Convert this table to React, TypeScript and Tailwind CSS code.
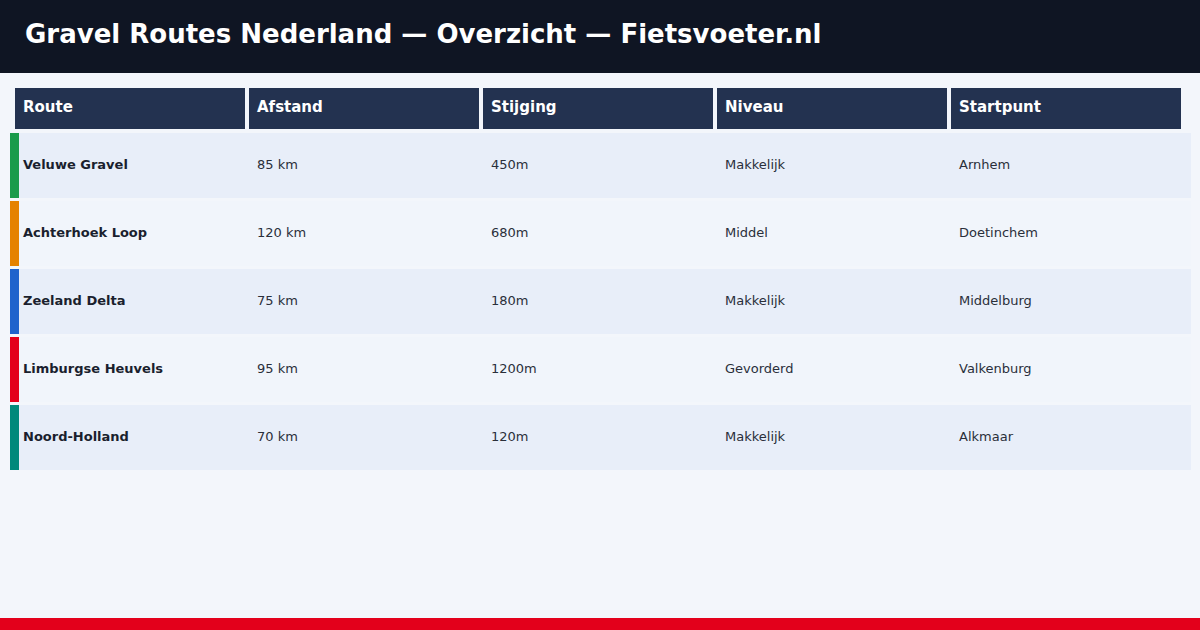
import React from "react";

const rows = [
  { name: "Veluwe Gravel", dist: "85 km", climb: "450m", level: "Makkelijk", start: "Arnhem", bar: "bg-[#1a9b4b]", bg: "bg-[#e8eef9]" },
  { name: "Achterhoek Loop", dist: "120 km", climb: "680m", level: "Middel", start: "Doetinchem", bar: "bg-[#e58200]", bg: "bg-[#f1f5fb]" },
  { name: "Zeeland Delta", dist: "75 km", climb: "180m", level: "Makkelijk", start: "Middelburg", bar: "bg-[#1f63cc]", bg: "bg-[#e8eef9]" },
  { name: "Limburgse Heuvels", dist: "95 km", climb: "1200m", level: "Gevorderd", start: "Valkenburg", bar: "bg-[#e3001b]", bg: "bg-[#f1f5fb]" },
  { name: "Noord-Holland", dist: "70 km", climb: "120m", level: "Makkelijk", start: "Alkmaar", bar: "bg-[#00897b]", bg: "bg-[#e8eef9]" },
];

const headers = ["Route", "Afstand", "Stijging", "Niveau", "Startpunt"];

export default function App() {
  return (
    <div
      className="w-[1200px] h-[630px] bg-[#f3f6fb] flex flex-col overflow-hidden"
      style={{ fontFamily: '"DejaVu Sans", "Liberation Sans", sans-serif' }}
    >
      <div className="h-[73px] bg-[#0f1523] flex items-center pl-[25px] pb-[6px] shrink-0">
        <h1 className="text-white font-bold text-[26px] leading-none">
          Gravel Routes Nederland — Overzicht — Fietsvoeter.nl
        </h1>
      </div>
      <div className="flex-1 flex flex-col pt-[15px]">
        <div className="flex gap-[4px] ml-[15px]">
          {headers.map((h) => (
            <div
              key={h}
              className="w-[230px] h-[41px] bg-[#233250] text-white font-bold text-[15px] leading-[18px] px-[8px] pt-[10px]"
            >
              {h}
            </div>
          ))}
        </div>
        <div className="flex flex-col gap-[3px] mt-[4px] ml-[10px] w-[1181px]">
          {rows.map((r) => (
            <div key={r.name} className={`flex h-[65px] ${r.bg}`}>
              <div className={`w-[9px] ${r.bar}`} />
              <div className="w-[234px] pl-[4px] pb-[2px] flex items-center text-[13px] font-bold text-[#1a1f2e]">
                {r.name}
              </div>
              <div className="w-[234px] pl-[4px] pb-[2px] flex items-center text-[13px] text-[#2a2f3a]">{r.dist}</div>
              <div className="w-[234px] pl-[4px] pb-[2px] flex items-center text-[13px] text-[#2a2f3a]">{r.climb}</div>
              <div className="w-[234px] pl-[4px] pb-[2px] flex items-center text-[13px] text-[#2a2f3a]">{r.level}</div>
              <div className="flex-1 pl-[4px] pb-[2px] flex items-center text-[13px] text-[#2a2f3a]">{r.start}</div>
            </div>
          ))}
        </div>
      </div>
      <div className="h-[12px] bg-[#e3001b] shrink-0" />
    </div>
  );
}
